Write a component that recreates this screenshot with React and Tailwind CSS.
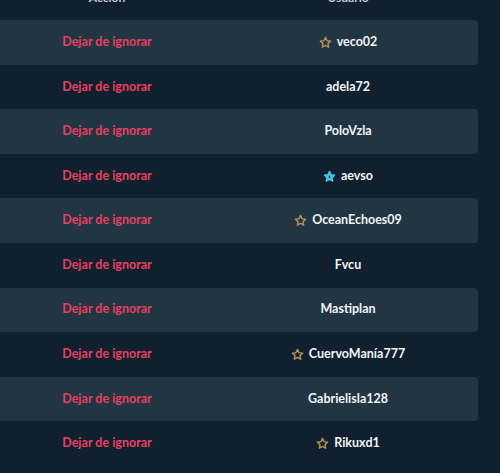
const users = [
  { name: "veco02", star: "gold" },
  { name: "adela72" },
  { name: "PoloVzla" },
  { name: "aevso", star: "blue" },
  { name: "OceanEchoes09", star: "gold" },
  { name: "Fvcu" },
  { name: "Mastiplan" },
  { name: "CuervoManía777", star: "gold" },
  { name: "Gabrielisla128" },
  { name: "Rikuxd1", star: "gold" },
];

const STAR = "M12 2.5l2.9 6.2 6.6.8-4.9 4.6 1.3 6.6L12 17.4l-5.9 3.3 1.3-6.6-4.9-4.6 6.6-.8z";

const Star = ({ type }) => {
  if (type === "blue") {
    return (
      <svg width="13" height="13" viewBox="0 0 24 24" className="shrink-0">
        <path d={STAR} fill="#3fc7df" stroke="#3fc7df" strokeWidth="2.5" strokeLinejoin="round" />
        <path d="M12 10l1.8 3-1.8 2-1.8-2z" fill="#10202f" />
      </svg>
    );
  }
  return (
    <svg width="13" height="13" viewBox="0 0 24 24" className="shrink-0">
      <path d={STAR} fill="none" stroke="#b48f5c" strokeWidth="2.6" strokeLinejoin="round" />
    </svg>
  );
};

const App = () => {
  return (
    <div
      className="w-[500px] h-[473px] overflow-hidden bg-[#10202f]"
      style={{ fontFamily: "Lato, 'Noto Sans', sans-serif" }}
    >
      <div className="w-[478px]">
        <div className="grid grid-cols-[214px_1fr] gap-x-1 h-[44px] mt-[-24px] items-center text-center text-[12px] font-bold text-[#c5ccd4]">
          <div>Acción</div>
          <div>Usuario</div>
        </div>
        {users.map((user, i) => (
          <div
            key={user.name}
            className={
              "grid grid-cols-[214px_1fr] gap-x-1 h-[44.6px] items-center text-center text-[12.5px] font-bold rounded-r " +
              (i % 2 === 0 ? "bg-[#213543]" : "")
            }
          >
            <div className="text-[#e8405f] cursor-pointer">Dejar de ignorar</div>
            <div className="flex items-center justify-center gap-[5px] text-[#f2f4f6]">
              {!!user.star && <Star type={user.star} />}
              <span>{user.name}</span>
            </div>
          </div>
        ))}
      </div>
    </div>
  );
};

export default App;
